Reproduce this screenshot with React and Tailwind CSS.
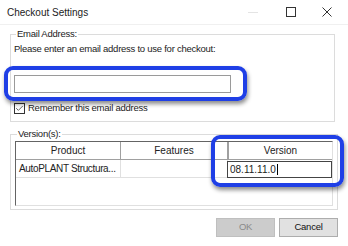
import { Check } from "lucide-react"

function Highlight({ className }) {
  return (
    <div
      className={`pointer-events-none absolute rounded-[9px] border-[4px] border-[#1f3fe6] shadow-[1px_3px_4px_rgba(0,0,0,0.45)] ${className}`}
    />
  )
}

export default function App() {
  return (
    <div className="relative h-[246px] w-[348px] overflow-hidden bg-white font-['Liberation_Sans',Arial,sans-serif] text-[9.5px] tracking-[-0.25px] text-[#222]">
      {/* title bar */}
      <div className="flex h-[25px] items-center border-b border-[#f0f0f0]">
        <span className="pl-[7px] text-[10px] tracking-normal">Checkout Settings</span>
        <div className="ml-auto flex h-full items-center">
          <div className="flex w-[38px] justify-center">
            <div className="h-px w-[10px] bg-[#e4e4e4]" />
          </div>
          <div className="flex w-[38px] justify-center">
            <div className="h-[10px] w-[10px] border border-[#333]" />
          </div>
          <div className="flex w-[38px] justify-center pr-[4px]">
            <svg width="10" height="10" viewBox="0 0 10 10" stroke="#333" strokeWidth="1">
              <path d="M0.5 0.5L9.5 9.5M9.5 0.5L0.5 9.5" />
            </svg>
          </div>
        </div>
      </div>

      {/* email group */}
      <fieldset className="ml-[10px] mt-[3px] w-[325px] border border-[#dcdcdc] px-[3px] pb-[7px]">
        <legend className="ml-[2px] px-[1px] leading-[12px]">Email Address:</legend>
        <p className="mt-[3px] leading-[12px]">Please enter an email address to use for checkout:</p>
        <div className="mt-[20px] h-[18px] w-[217px] border border-[#9a9a9a] bg-white" />
        <label className="mt-[9px] flex h-[12px] items-center gap-[3px] leading-[12px]">
          <span className="flex h-[11px] w-[11px] items-center justify-center border border-[#333] bg-white">
            <Check className="h-[9px] w-[9px]" strokeWidth={2} color="#333" />
          </span>
          Remember this email address
        </label>
      </fieldset>

      {/* versions group */}
      <fieldset className="ml-[10px] mt-[6px] w-[328px] border border-[#dcdcdc] px-[4px] pb-[3px]">
        <legend className="ml-[2px] px-[1px] leading-[12px]">Version(s):</legend>
        <div className="mt-px h-[65px] w-[318px] border-l border-t border-[#646464] border-r border-r-[#e0e0e0] border-b border-b-[#e0e0e0]">
          <div className="grid h-[18px] grid-cols-[105px_107px_1fr] text-[10px] tracking-normal">
            <div className="flex items-center justify-center border-b border-r border-[#a0a0a0]">Product</div>
            <div className="flex items-center justify-center border-b border-r border-[#a0a0a0]">Features</div>
            <div className="flex items-center justify-center border-b border-l border-[#a0a0a0]">Version</div>
          </div>
          <div className="grid h-[18px] grid-cols-[105px_107px_1fr] text-[10px]">
            <div className="flex items-center overflow-hidden whitespace-nowrap border-b border-r border-[#e0e0e0] pl-[3px] tracking-[-0.35px]">AutoPLANT Structura...</div>
            <div className="border-b border-r border-[#e0e0e0]" />
            <div className="flex items-center pr-[1px]">
              <div className="-ml-px flex h-[17px] w-[105px] items-center border border-[#444] bg-white pl-[2px] tracking-normal">
                08.11.11.0
                <span className="ml-px h-[11px] w-px bg-black" />
              </div>
            </div>
          </div>
        </div>
      </fieldset>

      {/* buttons */}
      <div className="mt-[8px] flex justify-end gap-[4px] pr-[10px]">
        <button className="h-[19px] w-[59px] border border-[#bfbfbf] bg-[#cccccc] text-[#8a8a8a]">OK</button>
        <button className="h-[19px] w-[59px] border border-[#adadad] bg-[#e1e1e1] text-[#111]">Cancel</button>
      </div>

      <Highlight className="left-[4px] top-[66px] h-[35px] w-[243px]" />
      <Highlight className="left-[211px] top-[135px] h-[52px] w-[133px]" />
    </div>
  )
}
